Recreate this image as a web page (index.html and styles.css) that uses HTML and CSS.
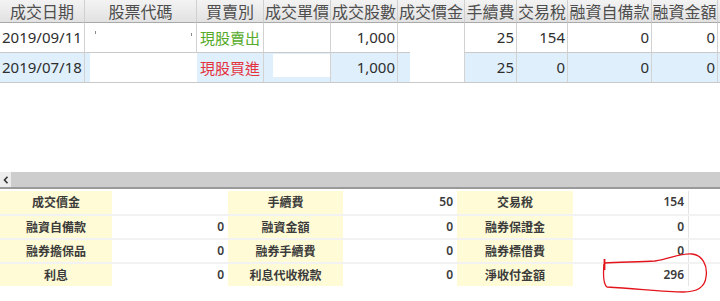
FILE: index.html
```html
<!DOCTYPE html>
<html lang="zh-Hant">
<head>
<meta charset="utf-8">
<title>成交明細</title>
<link rel="stylesheet" href="styles.css">
</head>
<body>
<div class="page">
  <div class="grid-wrap">
    <div class="grid">
      <div class="hd">成交日期</div>
      <div class="hd">股票代碼</div>
      <div class="hd">買賣別</div>
      <div class="hd">成交單價</div>
      <div class="hd">成交股數</div>
      <div class="hd">成交價金</div>
      <div class="hd">手續費</div>
      <div class="hd">交易稅</div>
      <div class="hd">融資自備款</div>
      <div class="hd">融資金額</div>
      <div class="hd hd-end"></div>

      <div class="c left">2019/09/11</div>
      <div class="c"></div>
      <div class="c center sell">現股賣出</div>
      <div class="c"></div>
      <div class="c num">1,000</div>
      <div class="c"></div>
      <div class="c num">25</div>
      <div class="c num">154</div>
      <div class="c num">0</div>
      <div class="c num">0</div>
      <div class="c end"></div>

      <div class="c alt left">2019/07/18</div>
      <div class="c alt"></div>
      <div class="c alt center buy">現股買進</div>
      <div class="c alt"></div>
      <div class="c alt num">1,000</div>
      <div class="c alt"></div>
      <div class="c alt num">25</div>
      <div class="c alt num">0</div>
      <div class="c alt num">0</div>
      <div class="c alt num">0</div>
      <div class="c alt end"></div>
    </div>
    <div class="mask mask-code"></div>
    <div class="mask mask-price"></div>
    <div class="mask mask-amount"></div>
    <span class="tick tick-a"></span>
    <span class="tick tick-b"></span>
  </div>

  <div class="spacer"></div>

  <div class="hscroll">
    <div class="hscroll-btn">
      <svg width="6" height="8" viewBox="0 0 6 8"><path d="M4.5 0.8 L1.5 4 L4.5 7.2" fill="none" stroke="#333" stroke-width="1.6"/></svg>
    </div>
    <div class="hscroll-track"></div>
  </div>

  <div class="summary">
    <div class="lb">成交價金</div><div class="val"></div>
    <div class="lb">手續費</div><div class="val">50</div>
    <div class="lb">交易稅</div><div class="val">154</div>
    <div class="blank"></div>

    <div class="lb">融資自備款</div><div class="val">0</div>
    <div class="lb">融資金額</div><div class="val">0</div>
    <div class="lb">融券保證金</div><div class="val">0</div>
    <div class="blank"></div>

    <div class="lb">融券擔保品</div><div class="val">0</div>
    <div class="lb">融券手續費</div><div class="val">0</div>
    <div class="lb">融券標借費</div><div class="val">0</div>
    <div class="blank"></div>

    <div class="lb">利息</div><div class="val">0</div>
    <div class="lb">利息代收稅款</div><div class="val">0</div>
    <div class="lb">淨收付金額</div><div class="val">296</div>
    <div class="blank"></div>
  </div>

  <svg class="circle" width="720" height="301" viewBox="0 0 720 301">
    <path d="M604 263 C620 262 640 262 655 261 C670 259 680 253 692 254 C702 255 708 265 706 277 C705 287 697 292 683 292 C665 292 640 289 607 287 C603 284 603 275 604 264"
      fill="none" stroke="#e3141c" stroke-width="1.3"/>
    <path d="M604.5 259 L604.5 270" stroke="#e3141c" stroke-width="1.8"/>
  </svg>
</div>
</body>
</html>
```

FILE: styles.css
```css
html, body {
  margin: 0;
  padding: 0;
  background: #ffffff;
}

body {
  font-family: "Noto Sans", "Noto Sans CJK TC", sans-serif;
  color: #333333;
  width: 720px;
  height: 301px;
  overflow: hidden;
}

.page {
  position: relative;
  width: 720px;
  height: 301px;
  display: flex;
  flex-direction: column;
}

.grid-wrap {
  position: relative;
}

.grid {
  display: grid;
  grid-template-columns: 85px 112px 67px 67px 67px 67px 52px 51px 84px 66px 1fr;
  grid-template-rows: 23px 30px 30px;
}

.hd {
  box-sizing: border-box;
  background: linear-gradient(#f3f3f3, #e2e2e2);
  border-right: 1px solid #cfcfcf;
  border-bottom: 1px solid #a9a9a9;
  font-family: "Noto Sans CJK TC", sans-serif;
  font-size: 16px;
  color: #4e4e4e;
  line-height: 22px;
  text-align: center;
  white-space: nowrap;
  overflow: hidden;
}

.hd-end {
  border-right: none;
}

.c {
  box-sizing: border-box;
  background: #ffffff;
  border-right: 1px solid #d2d2d2;
  border-bottom: 1px solid #c9c9c9;
  font-size: 15px;
  line-height: 29px;
  color: #2e2e2e;
  white-space: nowrap;
  overflow: hidden;
}

.c.alt {
  background: #dff0fc;
}

.c.end {
  border-right: none;
}

.left {
  padding-left: 2px;
}

.num {
  text-align: right;
  padding-right: 2px;
}

.center {
  text-align: center;
  font-family: "Noto Sans CJK TC", sans-serif;
}

.sell {
  color: #56aa2a;
}

.buy {
  color: #e5323f;
}

.mask {
  position: absolute;
  background: #ffffff;
}

.mask-code {
  left: 90px;
  top: 53px;
  width: 107px;
  height: 29px;
}

.mask-price {
  left: 273px;
  top: 54px;
  width: 57px;
  height: 23px;
}

.mask-amount {
  left: 410px;
  top: 24px;
  width: 54px;
  height: 58px;
}

.tick {
  position: absolute;
  width: 1px;
  height: 3px;
  background: #8a8a8a;
}

.tick-a {
  left: 95px;
  top: 31px;
}

.tick-b {
  left: 191px;
  top: 33px;
}

.spacer {
  height: 89px;
  flex: none;
}

.hscroll {
  display: flex;
  height: 15px;
  border-bottom: 2px solid #9a9a9a;
  flex: none;
}

.hscroll-btn {
  width: 11px;
  background: #ededed;
  display: flex;
  align-items: center;
  justify-content: center;
}

.hscroll-track {
  flex: 1;
  background: #cdcdcd;
}

.summary {
  margin-top: 2px;
  display: grid;
  grid-template-columns: 112px 116px 115px 114px 116px 115px 1fr;
  grid-template-rows: 23px 22px 22px 22px;
  row-gap: 2px;
  background: #f2f2f2;
}

.lb {
  background: #fffbd6;
  font-family: "Noto Sans CJK TC", sans-serif;
  font-weight: bold;
  font-size: 12px;
  color: #3b3b3b;
  text-align: center;
  line-height: 22px;
}

.val {
  background: #ffffff;
  font-size: 12px;
  font-weight: 600;
  color: #3a3a3a;
  text-align: right;
  padding-right: 4px;
  line-height: 22px;
}

.blank {
  background: #ffffff;
  border-left: 1px solid #e4e4e4;
}

.circle {
  position: absolute;
  left: 0;
  top: 0;
  pointer-events: none;
}
```
